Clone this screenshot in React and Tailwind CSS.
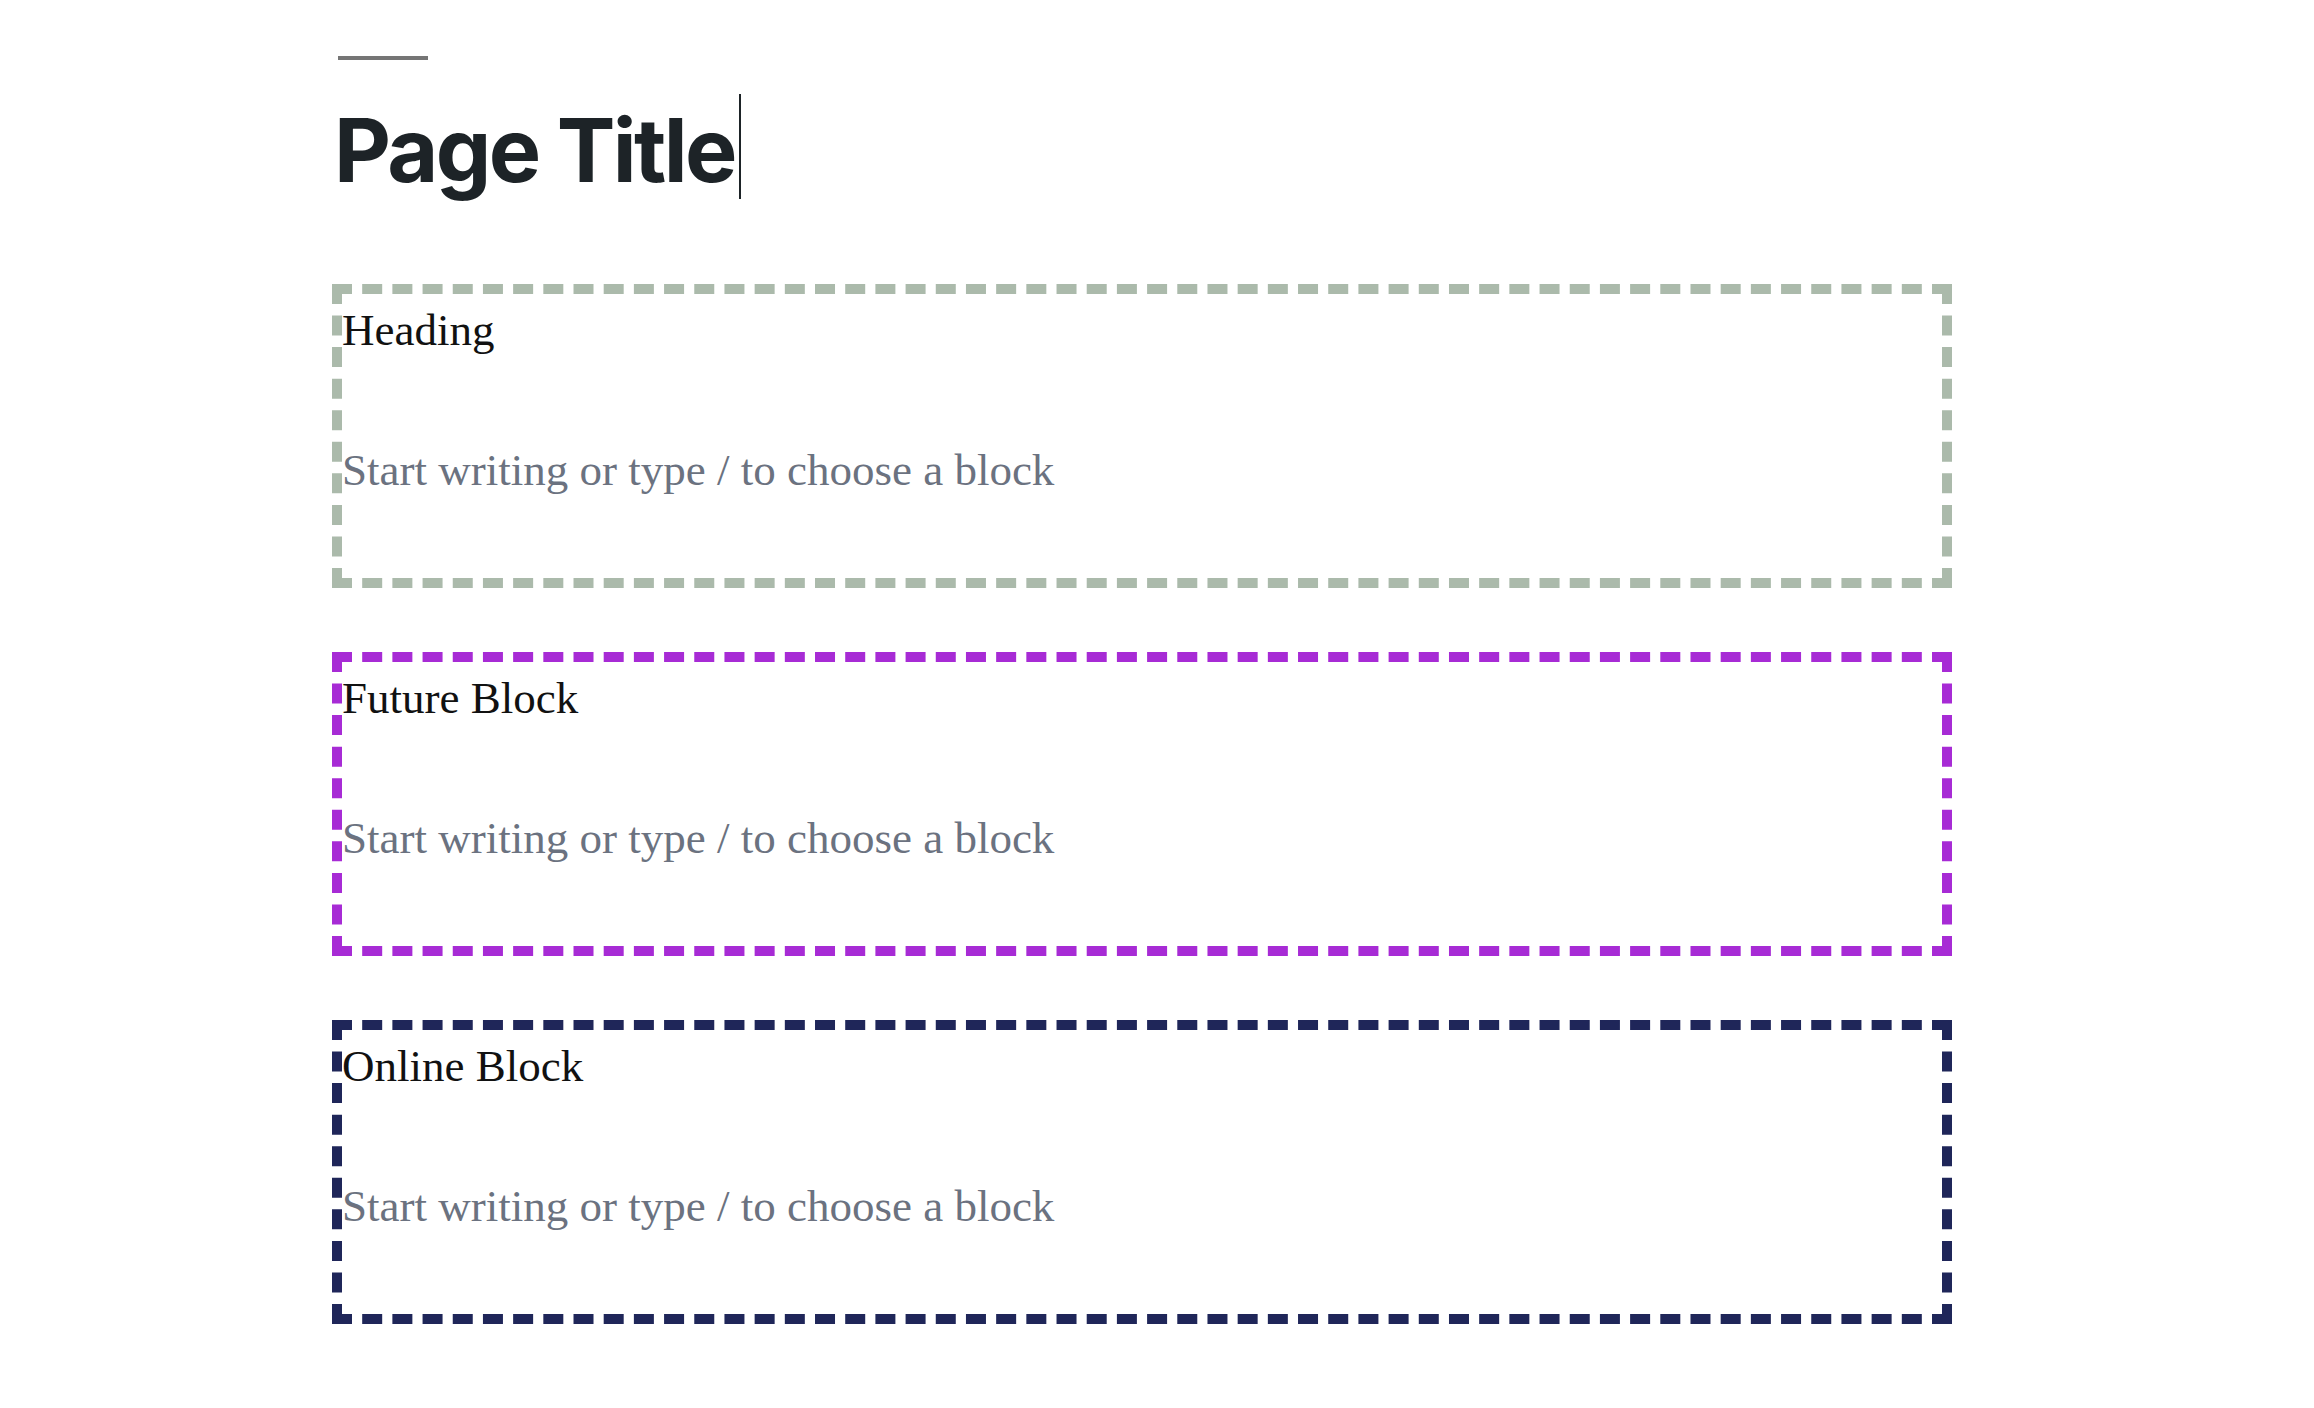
import React from "react";

const blocks = [
  { title: "Heading", border: "border-[#abbaab]" },
  { title: "Future Block", border: "border-[#a72bd5]" },
  { title: "Online Block", border: "border-[#1f2659]" },
];

const Block = ({ title, border }) => (
  <div className={`h-[304px] border-[10px] border-dashed ${border} pt-[3px]`}>
    <p className="text-[45px] leading-[66px] text-[#111111] font-['Liberation_Serif',serif]">
      {title}
    </p>
    <p className="mt-[74px] text-[45px] leading-[66px] text-[#6b7280] font-['Liberation_Serif',serif]">
      Start writing or type / to choose a block
    </p>
  </div>
);

export default function App() {
  return (
    <div className="min-h-screen bg-white pt-[56px]">
      <div className="ml-[332px] w-[1620px]">
        <div className="ml-[6px] h-[4px] w-[90px] bg-[#757575]" />
        <h1 className="mt-[37px] ml-[2px] flex h-[106px] items-start text-[88px] leading-[106px] font-bold tracking-[-0.03em] text-[#1d2327] font-['Inter',sans-serif]">
          Page Title
          <span className="-mt-[3px] ml-[4px] inline-block h-[105px] w-[2px] bg-[#1d2327]" />
        </h1>
        <div className="mt-[81px] flex flex-col gap-[64px]">
          {blocks.map((b) => (
            <Block key={b.title} {...b} />
          ))}
        </div>
      </div>
    </div>
  );
}
